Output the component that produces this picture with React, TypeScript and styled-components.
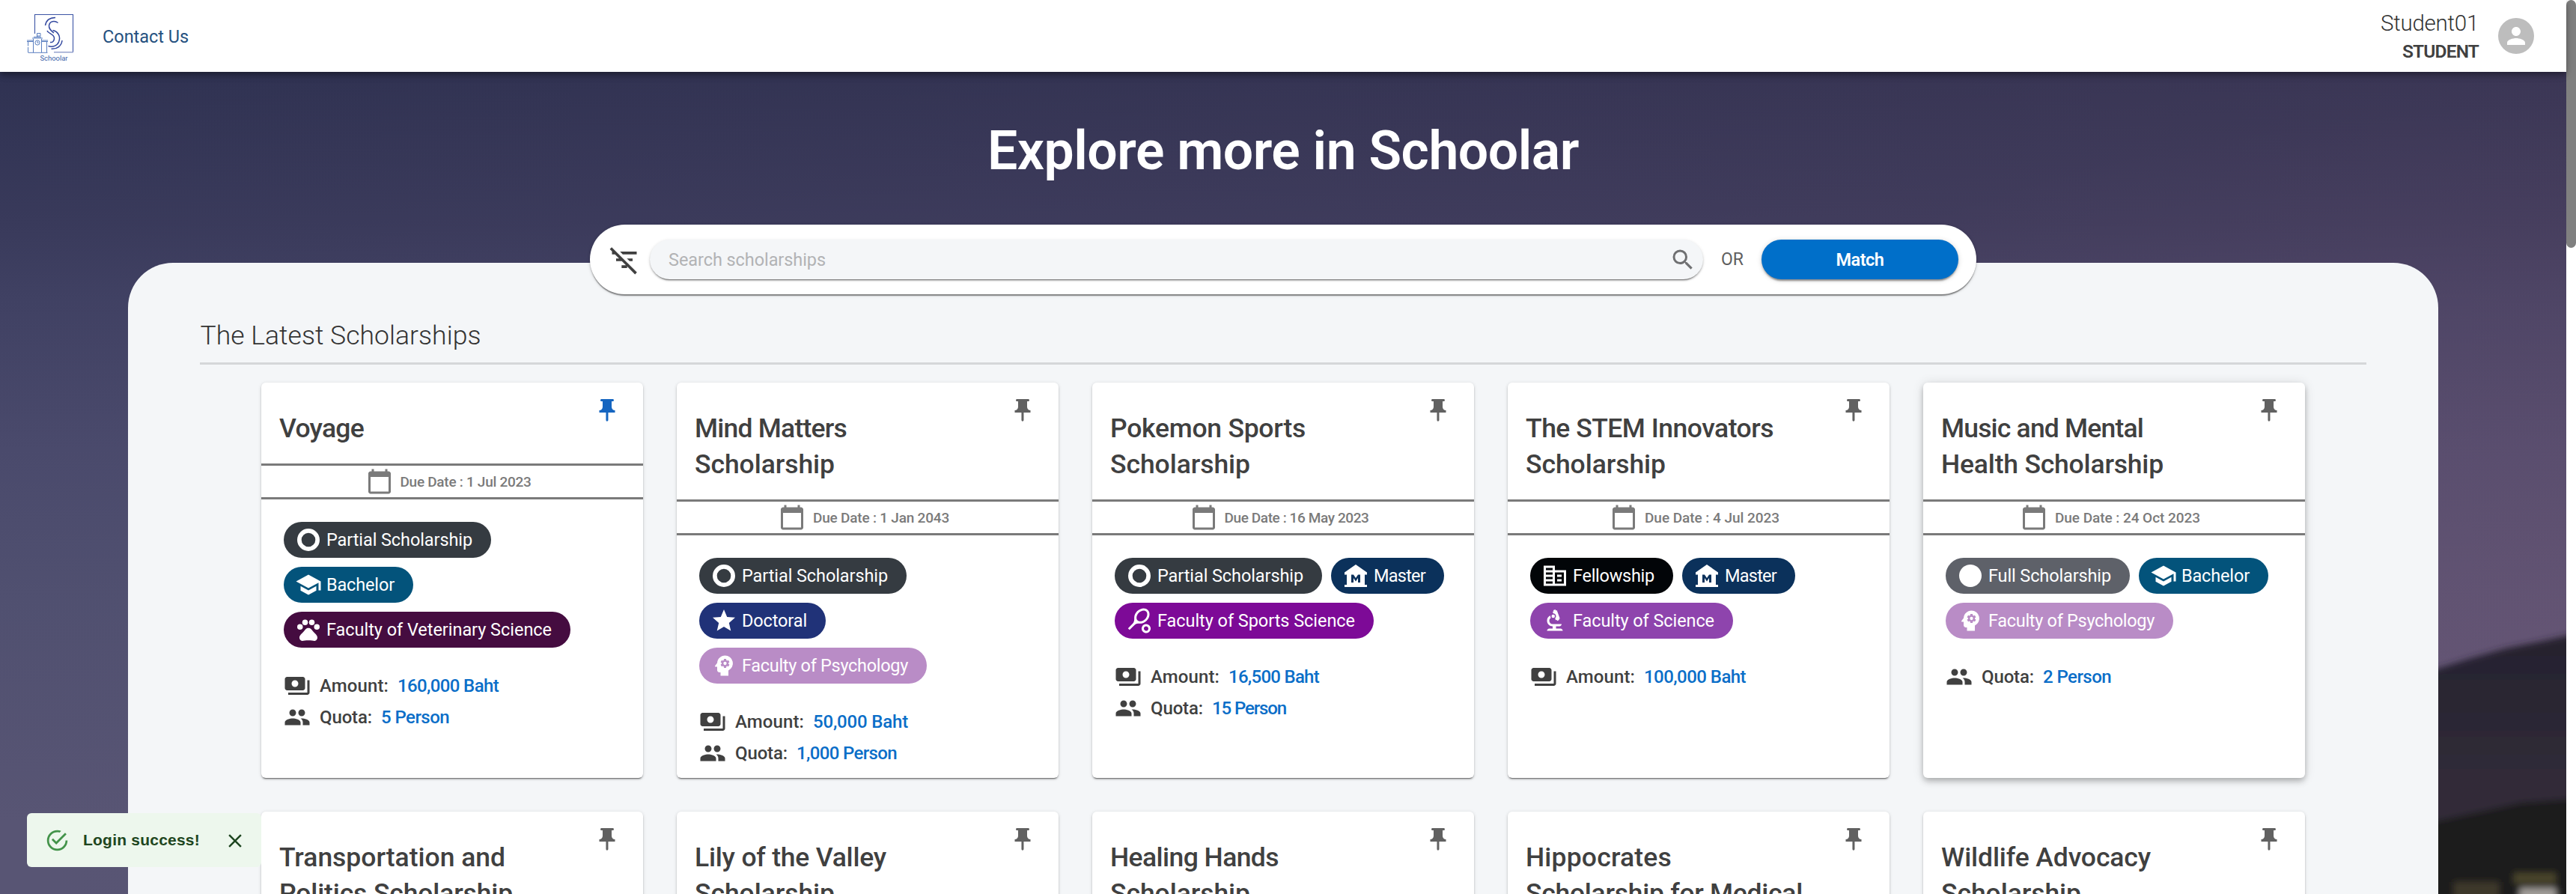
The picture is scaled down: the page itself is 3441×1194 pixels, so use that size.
import React, { useLayoutEffect, useRef, useState } from "react";
import styled, { createGlobalStyle } from "styled-components";
import {
  MdPushPin, MdCalendarToday, MdCircle, MdSchool, MdPets, MdStar, MdPsychology,
  MdMuseum, MdSportsTennis, MdBiotech, MdPayments, MdPeople, MdSearch, MdFilterListOff, MdClose, MdPerson,
} from "react-icons/md";

const Global = createGlobalStyle`
  *, *::before, *::after { box-sizing: border-box; }
  html, body { margin: 0; padding: 0; overflow: hidden; background: #fff; }
  body { font-family: Roboto, "Liberation Sans", sans-serif; color: #404040; }
`;

const Shell = styled.div`display: flex; height: 1194px; overflow: hidden; position: relative;`;
const Page = styled.div`
  flex: 1; min-width: 0; position: relative; isolation: isolate; display: flex; flex-direction: column;
`;
const Track = styled.div`width: 13px; background: #fff;`;
const Thumb = styled.div`height: 331px; border-radius: 7px; background: #808080;`;

const Backdrop = styled.div`
  position: absolute; inset: 0; z-index: -1; overflow: hidden;
  background:
    radial-gradient(ellipse 1400px 700px at 100% 70%, rgba(170, 110, 145, .15), rgba(170, 110, 145, 0)),
    linear-gradient(90deg, rgba(115, 75, 100, 0) 0%, rgba(115, 75, 100, .18) 100%),
    linear-gradient(180deg, #2f3252 96px, #393a5b 300px, #404163 400px, #4a4a6c 600px, #505070 800px, #585574 1100px);
`;
const Scene = styled.svg`position: absolute; right: 0; bottom: 0; display: block;`;

const Header = styled.header`
  height: 96px; background: #fff; display: flex; align-items: center; padding: 0 43px 0 36px;
  box-shadow: 0 3px 6px -1px rgba(0, 0, 0, .25), 0 6px 8px rgba(0, 0, 0, .14), 0 1px 15px rgba(0, 0, 0, .12);
`;
const ContactLink = styled.a`margin-left: 36px; padding-top: 1px; font-size: 23.5px; line-height: 30px; color: #25517f;`;
const Account = styled.div`
  margin-left: auto; margin-right: 26px; padding-top: 4px; display: flex; flex-direction: column; align-items: flex-end;
`;
const UserName = styled.div`font-size: 29.5px; font-weight: 300; line-height: 37px; color: #333;`;
const UserRole = styled.div`font-size: 24.5px; font-weight: 600; line-height: 38px; color: #404040;`;
const Avatar = styled.div`
  width: 48px; height: 48px; border-radius: 50%; background: #bdbdbd; color: #fff;
  display: flex; align-items: center; justify-content: center;
`;

const Hero = styled.h1`
  margin: 61px 0 0; height: 90px; line-height: 90px; font-size: 71.5px; font-weight: 600; color: #fff; text-align: center;
`;
const SearchBar = styled.div`
  position: relative; z-index: 1; align-self: center; margin-top: 53px; width: 1852px; height: 93px;
  border-radius: 47px; background: #fff; display: flex; align-items: center; padding: 0 24px 0 24px;
  box-shadow: 0 3px 1px -1px rgba(0, 0, 0, .3), 0 2px 2px rgba(0, 0, 0, .18), 0 1px 5px rgba(0, 0, 0, .14);
`;
const SearchField = styled.div`
  margin-left: 12px; width: 1407px; height: 53px; border-radius: 27px; background: #f4f6f8;
  display: flex; align-items: center; justify-content: space-between; padding: 0 9px 0 25px;
  font-size: 23.5px; color: #b2b3b5;
  box-shadow: 0 3px 1px -2px rgba(0, 0, 0, .35), 0 2px 2px rgba(0, 0, 0, .2), 0 1px 4px rgba(0, 0, 0, .12);
  svg { color: #6f7072; }
`;
const Or = styled.span`margin-left: 24px; font-size: 23px; color: #606060;`;
const MatchButton = styled.button`
  margin-left: auto; width: 263px; height: 53px; border: 0; border-radius: 27px; background: #006fc9; color: #fff;
  font: 600 23.5px Roboto, sans-serif;
  box-shadow: 0 4px 2px -2px rgba(0, 0, 0, .25), 0 2px 3px rgba(0, 0, 0, .2), 0 1px 7px rgba(0, 0, 0, .16);
`;

const Panel = styled.main`
  width: 90%; margin: -42px auto 0; flex: 1; min-height: 0; overflow: hidden; background: #f4f6f8;
  border-radius: 60px 60px 0 0; padding: 73px 96px 0;
`;
const SectionTitle = styled.h2`
  margin: 0; height: 63px; line-height: 48px; font-size: 35.5px; font-weight: 300; border-bottom: 3px solid #d5d7d9;
  color: #333;
`;
const CardGrid = styled.div`
  display: grid; grid-template-columns: repeat(5, 510px); grid-auto-rows: 528px; gap: 45px;
  justify-content: center; margin-top: 24px;
`;
const CardBox = styled.article<{ $raised?: boolean }>`
  background: #fff; border-radius: 6px; position: relative; display: flex; flex-direction: column;
  box-shadow: ${(p) => p.$raised
    ? "0 3px 7px -1px rgba(0,0,0,.18), 0 6px 9px rgba(0,0,0,.11), 0 1px 15px rgba(0,0,0,.12)"
    : "0 3px 1px -2px rgba(0,0,0,.35), 0 2px 2px rgba(0,0,0,.2), 0 1px 5px rgba(0,0,0,.14)"};
`;
const Pin = styled.div<{ $active?: boolean }>`
  position: absolute; top: 19px; right: 30px; width: 36px; height: 36px; font-size: 36px;
  color: ${(p) => (p.$active ? "#1565c0" : "#616161")};
  svg { display: block; }
`;
const CardTitle = styled.h3`
  margin: 0; padding: 37px 24px 23px; font-size: 35.5px; line-height: 48px; font-weight: 500; color: #404040;
  display: flex; flex-direction: column; align-items: flex-start; flex: none;
`;
const DueBar = styled.div`
  flex: none; height: 48px; border: solid #7a7a7a; border-width: 3px 0; display: flex; align-items: center;
  justify-content: center; gap: 10px; padding-right: 10px; color: #7a7a7a; font-size: 19px; font-weight: 500;
  svg { font-size: 36px; }
`;
const Body = styled.div`padding: 30px 30px 0;`;
const ChipList = styled.div`display: flex; flex-wrap: wrap; gap: 12px;`;
const ChipBox = styled.div<{ $bg: string }>`
  height: 48px; border-radius: 24px; background: ${(p) => p.$bg}; color: #fff; font-size: 23.5px;
  display: flex; align-items: center; padding: 0 25px 0 15px; gap: 6px;
  svg { font-size: 36px; flex: none; }
`;
const Facts = styled.div`margin-top: 30px; display: flex; flex-direction: column;`;
const Fact = styled.div`
  height: 42px; display: flex; align-items: center; font-size: 24px; font-weight: 500; color: #404040;
  svg { font-size: 36px; margin-right: 12px; }
`;
const FactValue = styled.span`margin-left: 12px; color: #0a6ec8;`;

const Toast = styled.div`
  position: absolute; left: 36px; top: 1086px; width: 313px; height: 72px; border-radius: 6px; background: #edf7ed;
  color: #1e4620; display: flex; align-items: center; padding: 0 20px 0 24px;
  font: 700 21px "Liberation Sans", Arial, sans-serif;
`;
const ToastText = styled.span`margin-left: 18px;`;
const CloseButton = styled.span`margin-left: auto; padding-top: 1px; font-size: 30px; display: flex;`;

const Run = styled.span`display: inline-block; white-space: nowrap;`;

/** Tracks a line of text out to the given width in pixels. */
function Tracked({ w, children }: { w: number; children: string }) {
  const ref = useRef<HTMLSpanElement>(null);
  const [spacing, setSpacing] = useState(0);
  useLayoutEffect(() => {
    const el = ref.current;
    if (el) setSpacing((w - el.getBoundingClientRect().width) / children.length);
  }, [w, children]);
  return <Run ref={ref} style={{ letterSpacing: spacing }}>{children}</Run>;
}

const BusinessIcon = () => (
  <svg width="1em" height="1em" viewBox="0 0 24 24" fill="currentColor">
    <path d="M12 7V3H2v18h20V7H12zm-2 12H4v-2h6v2zm0-4H4v-2h6v2zm0-4H4V9h6v2zm0-4H4V5h6v2zm10 12h-8V9h8v10zm-2-8h-4v2h4v-2zm0 4h-4v2h4v-2z" />
  </svg>
);
const RingIcon = () => (
  <svg width="1em" height="1em" viewBox="0 0 24 24" fill="none" stroke="currentColor" strokeWidth="3.8">
    <circle cx="12" cy="12" r="8.1" />
  </svg>
);
const SuccessIcon = () => (
  <svg width="33" height="33" viewBox="0 0 24 24" fill="#43934a">
    <path d="M20,12A8,8 0 0,1 12,20A8,8 0 0,1 4,12A8,8 0 0,1 12,4C12.76,4 13.5,4.11 14.2,4.31L15.77,2.74C14.61,2.26 13.34,2 12,2A10,10 0 0,0 2,12A10,10 0 0,0 12,22A10,10 0 0,0 22,12M7.91,10.08L6.5,11.5L11,16L21,6L19.59,4.58L11,13.17L7.91,10.08Z" />
  </svg>
);

const LogoSvg = styled.svg`display: block; margin-top: 2px;`;
const Logo = () => (
  <LogoSvg width="65" height="70" viewBox="36 14 65 70" fill="none" stroke="#3c55a5">
    <path d="M46.5 45V19.5H97.5V70" strokeWidth="1.1" />
    <path d="M72 69.7H98" strokeWidth="1.4" stroke="#8f9cca" />
    <g stroke="#33489f" strokeWidth="1.5">
      <path d="M60.5 34C61.5 27.500 66.500 23.600 74 23.500" />
      <path d="M77.500 30.500C73 27.200 66.500 28 65.500 34C65 39 68.500 41 72 44" />
      <path d="M63 41C64.500 45.500 72 44.500 72.500 51C72.500 55 70 57 67 56.500" />
      <path d="M70.500 40.500C77.500 42 81.500 49 78.500 56C76.500 61 70.500 63.500 64.500 61.500" />
      <path d="M83 54C82 61.500 76.500 65.800 68.500 65.300" />
    </g>
    <g stroke="#5a7fc0" strokeWidth="1">
      <path d="M37.500 70.300H63.500M37.500 63V70M37.500 55V61.500M62.500 55V70M36 54H45M55 54H64M36 55.500H45M55 55.500H64M44.500 52V70M55.500 52V70M43 51H57M45 49.500H55M49.500 49.500V44.500H54V48H50" />
      <circle cx="50" cy="57" r="3.1" />
      <path d="M50 55V57.200H51.500" />
    </g>
    <text x="53.500" y="81" fontSize="9.500" textLength="37" stroke="none" fill="#3c62a8" fontFamily="Roboto, sans-serif">Schoolar</text>
  </LogoSvg>
);

const Landscape = () => (
  <Scene width="220" height="494" viewBox="0 0 220 494">
    <defs>
      <filter id="soft" x="-20%" y="-20%" width="140%" height="140%"><feGaussianBlur stdDeviation="4.5" /></filter>
      <linearGradient id="ridge" x1="0" y1="0" x2="0" y2="1">
        <stop offset="0" stopColor="#25222e" /><stop offset=".5" stopColor="#302b38" /><stop offset="1" stopColor="#34303a" />
      </linearGradient>
    </defs>
    <g filter="url(#soft)">
      <path d="M0 210L49 193L90 180L140 166L190 156L240 145V520H0Z" fill="url(#ridge)" />
      <path d="M0 405L49 396L110 383L160 372L240 366V520H0Z" fill="#1d1c1c" />
      <path d="M150 466H206V480H150Z" fill="#4a442c" />
      <path d="M70 478H130V520H70Z" fill="#3c382a" />
      <path d="M158 486H206V530H158Z" fill="#a09c98" />
    </g>
  </Scene>
);

type ChipDef = { icon: React.ReactNode; bg: string; label: string; w: number };
const CHIPS: Record<string, ChipDef> = {
  partial: { icon: <RingIcon />, bg: "#353b41", label: "Partial Scholarship", w: 195 },
  full: { icon: <MdCircle />, bg: "#5e6169", label: "Full Scholarship", w: 164 },
  fellowship: { icon: <BusinessIcon />, bg: "#020508", label: "Fellowship", w: 109 },
  bachelor: { icon: <MdSchool />, bg: "#03537b", label: "Bachelor", w: 91 },
  master: { icon: <MdMuseum />, bg: "#0b315b", label: "Master", w: 69 },
  doctoral: { icon: <MdStar />, bg: "#203278", label: "Doctoral", w: 87 },
  vet: { icon: <MdPets />, bg: "#450c40", label: "Faculty of Veterinary Science", w: 301 },
  psych: { icon: <MdPsychology />, bg: "#b98cc6", label: "Faculty of Psychology", w: 222 },
  sports: { icon: <MdSportsTennis />, bg: "#7d0a97", label: "Faculty of Sports Science", w: 264 },
  science: { icon: <MdBiotech />, bg: "#8e44ad", label: "Faculty of Science", w: 189 },
};

type Line = [string, number];
type Card = { title: Line[]; due: Line; chips: string[]; amount?: Line; quota?: Line; pinned?: boolean; raised?: boolean };
const CARDS: Card[] = [
  { title: [["Voyage", 113]], due: ["Due Date : 1 Jul 2023", 175], chips: ["partial", "bachelor", "vet"], amount: ["160,000 Baht", 135], quota: ["5 Person", 91], pinned: true },
  { title: [["Mind Matters", 203], ["Scholarship", 187]], due: ["Due Date : 1 Jan 2043", 182], chips: ["partial", "doctoral", "psych"], amount: ["50,000 Baht", 127], quota: ["1,000 Person", 134] },
  { title: [["Pokemon Sports", 261], ["Scholarship", 187]], due: ["Due Date : 16 May 2023", 193], chips: ["partial", "master", "sports"], amount: ["16,500 Baht", 121], quota: ["15 Person", 99] },
  { title: [["The STEM Innovators", 331], ["Scholarship", 187]], due: ["Due Date : 4 Jul 2023", 180], chips: ["fellowship", "master", "science"], amount: ["100,000 Baht", 136] },
  { title: [["Music and Mental", 270], ["Health Scholarship", 297]], due: ["Due Date : 24 Oct 2023", 194], chips: ["full", "bachelor", "psych"], quota: ["2 Person", 91], raised: true },
  { title: [["Transportation and", 302], ["Politics Scholarship", 312]], due: ["Due Date : 1 Jul 2023", 175], chips: [] },
  { title: [["Lily of the Valley", 256], ["Scholarship", 187]], due: ["Due Date : 1 Jul 2023", 175], chips: [] },
  { title: [["Healing Hands", 225], ["Scholarship", 187]], due: ["Due Date : 1 Jul 2023", 175], chips: [] },
  { title: [["Hippocrates", 195], ["Scholarship for Medical", 370]], due: ["Due Date : 1 Jul 2023", 175], chips: [] },
  { title: [["Wildlife Advocacy", 280], ["Scholarship", 187]], due: ["Due Date : 1 Jul 2023", 175], chips: [] },
];

const ScholarshipCard = ({ title, due, chips, amount, quota, pinned, raised }: Card) => (
  <CardBox $raised={raised}>
    <Pin $active={pinned}><MdPushPin /></Pin>
    <CardTitle>{title.map(([t, w]) => <Tracked key={t} w={w}>{t}</Tracked>)}</CardTitle>
    <DueBar><MdCalendarToday /><Tracked w={due[1]}>{due[0]}</Tracked></DueBar>
    <Body>
      <ChipList>
        {chips.map((id) => {
          const c = CHIPS[id];
          return <ChipBox key={id} $bg={c.bg}>{c.icon}<Tracked w={c.w}>{c.label}</Tracked></ChipBox>;
        })}
      </ChipList>
      <Facts>
        {amount && <Fact><MdPayments /><Tracked w={92}>Amount:</Tracked><FactValue><Tracked w={amount[1]}>{amount[0]}</Tracked></FactValue></Fact>}
        {quota && <Fact><MdPeople /><Tracked w={70}>Quota:</Tracked><FactValue><Tracked w={quota[1]}>{quota[0]}</Tracked></FactValue></Fact>}
      </Facts>
    </Body>
  </CardBox>
);

export default function App() {
  return (
    <Shell>
      <Global />
      <Page>
        <Backdrop><Landscape /></Backdrop>
        <Header>
          <Logo />
          <ContactLink><Tracked w={115}>Contact Us</Tracked></ContactLink>
          <Account>
            <UserName><Tracked w={131}>Student01</Tracked></UserName>
            <UserRole><Tracked w={102}>STUDENT</Tracked></UserRole>
          </Account>
          <Avatar><MdPerson size={36} /></Avatar>
        </Header>
        <Hero><Tracked w={790}>Explore more in Schoolar</Tracked></Hero>
        <SearchBar>
          <MdFilterListOff size={44} color="#404040" />
          <SearchField><Tracked w={210}>Search scholarships</Tracked><MdSearch size={36} /></SearchField>
          <Or><Tracked w={30}>OR</Tracked></Or>
          <MatchButton><Tracked w={64}>Match</Tracked></MatchButton>
        </SearchBar>
        <Panel>
          <SectionTitle><Tracked w={375}>The Latest Scholarships</Tracked></SectionTitle>
          <CardGrid>{CARDS.map((c) => <ScholarshipCard key={c.title[0][0]} {...c} />)}</CardGrid>
        </Panel>
        <Toast>
          <SuccessIcon />
          <ToastText><Tracked w={156}>Login success!</Tracked></ToastText>
          <CloseButton><MdClose /></CloseButton>
        </Toast>
      </Page>
      <Track><Thumb /></Track>
    </Shell>
  );
}
